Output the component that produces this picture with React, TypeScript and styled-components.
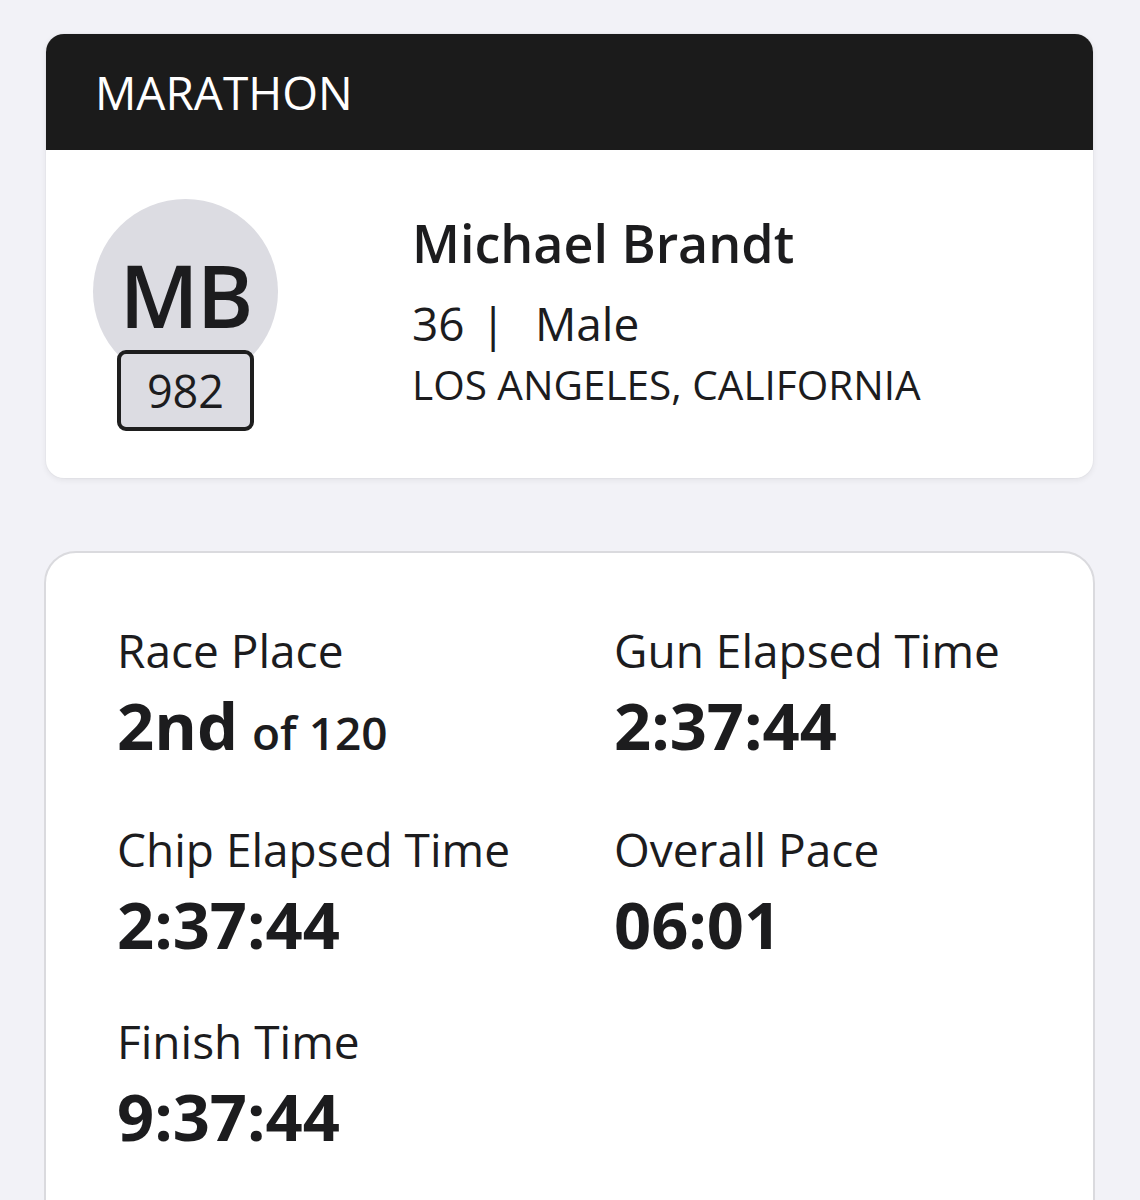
import React from "react";
import styled, { createGlobalStyle } from "styled-components";

const GlobalStyle = createGlobalStyle`
  html, body {
    margin: 0;
    padding: 0;
    background: #f2f2f7;
  }
  body {
    font-family: "Open Sans", "Noto Sans", sans-serif;
    color: #1c1c1e;
    -webkit-font-smoothing: antialiased;
  }
  * { box-sizing: border-box; }
`;

const Page = styled.div`
  padding: 34px 47px 0 46px;
  display: flex;
  flex-direction: column;
  gap: 73px;
`;

const AthleteCard = styled.section`
  background: #ffffff;
  border-radius: 18px;
  overflow: hidden;
  box-shadow: 0 2px 6px rgba(0, 0, 0, 0.07), 0 0 0 1px rgba(0, 0, 0, 0.02);
`;

const EventBar = styled.header`
  height: 116px;
  background: #1b1b1b;
  color: #ffffff;
  display: flex;
  align-items: center;
  padding-left: 49px;
  font-size: 46px;
  font-weight: 400;
`;

const AthleteBody = styled.div`
  display: flex;
  align-items: flex-start;
  gap: 134px;
  padding: 49px 47px 47px 47px;
`;

const AvatarWrap = styled.div`
  position: relative;
  width: 185px;
  height: 232px;
  flex: none;
`;

const Avatar = styled.div`
  width: 185px;
  height: 185px;
  border-radius: 50%;
  background: #dcdce2;
  display: flex;
  align-items: center;
  justify-content: center;
  font-size: 86px;
  font-weight: 600;
  letter-spacing: -2px;
  padding-top: 6px;
  color: #1c1c1e;
`;

const BibBadge = styled.div`
  position: absolute;
  left: 24px;
  top: 151px;
  width: 137px;
  height: 81px;
  border: 4px solid #1e1e1e;
  border-radius: 9px;
  background: #dcdce2;
  display: flex;
  align-items: center;
  justify-content: center;
  font-size: 45px;
  font-weight: 400;
  color: #1c1c1e;
`;

const AthleteInfo = styled.div`
  display: flex;
  flex-direction: column;
  margin-top: 7px;
`;

const AthleteName = styled.div`
  font-size: 52px;
  font-weight: 600;
  line-height: 74px;
`;

const AthleteMeta = styled.div`
  font-size: 46px;
  line-height: 86px;
  display: flex;
  align-items: baseline;
`;

const Separator = styled.span`
  margin: 0 29px 0 16px;
`;

const AthleteCity = styled.div`
  font-size: 40.5px;
  line-height: 38px;
  text-transform: uppercase;
`;

const ResultsCard = styled.section`
  background: #ffffff;
  border: 2px solid #dadade;
  border-radius: 32px;
  margin: 0 -2px;
  padding: 67px 40px 120px 71px;
`;

const StatGrid = styled.div`
  display: grid;
  grid-template-columns: 497px 1fr;
  row-gap: 42px;
`;

const Stat = styled.div`
  display: flex;
  flex-direction: column;
`;

const StatLabel = styled.div`
  font-size: 46px;
  line-height: 60px;
  font-weight: 400;
`;

const StatValue = styled.div`
  font-size: 65px;
  line-height: 90px;
  font-weight: 700;
  white-space: nowrap;
`;

const StatSuffix = styled.span`
  font-size: 46px;
  font-weight: 600;
  margin-left: 2px;
`;

type StatItem = { label: string; value: string; suffix?: string };

const stats: StatItem[] = [
  { label: "Race Place", value: "2nd", suffix: "of 120" },
  { label: "Gun Elapsed Time", value: "2:37:44" },
  { label: "Chip Elapsed Time", value: "2:37:44" },
  { label: "Overall Pace", value: "06:01" },
  { label: "Finish Time", value: "9:37:44" },
];

export default function App() {
  return (
    <>
      <GlobalStyle />
      <Page>
        <AthleteCard>
          <EventBar>MARATHON</EventBar>
          <AthleteBody>
            <AvatarWrap>
              <Avatar>MB</Avatar>
              <BibBadge>982</BibBadge>
            </AvatarWrap>
            <AthleteInfo>
              <AthleteName>Michael Brandt</AthleteName>
              <AthleteMeta>
                36<Separator>|</Separator>Male
              </AthleteMeta>
              <AthleteCity>Los Angeles, California</AthleteCity>
            </AthleteInfo>
          </AthleteBody>
        </AthleteCard>

        <ResultsCard>
          <StatGrid>
            {stats.map((s) => (
              <Stat key={s.label}>
                <StatLabel>{s.label}</StatLabel>
                <StatValue>
                  {s.value}
                  {s.suffix && <StatSuffix> {s.suffix}</StatSuffix>}
                </StatValue>
              </Stat>
            ))}
          </StatGrid>
        </ResultsCard>
      </Page>
    </>
  );
}
